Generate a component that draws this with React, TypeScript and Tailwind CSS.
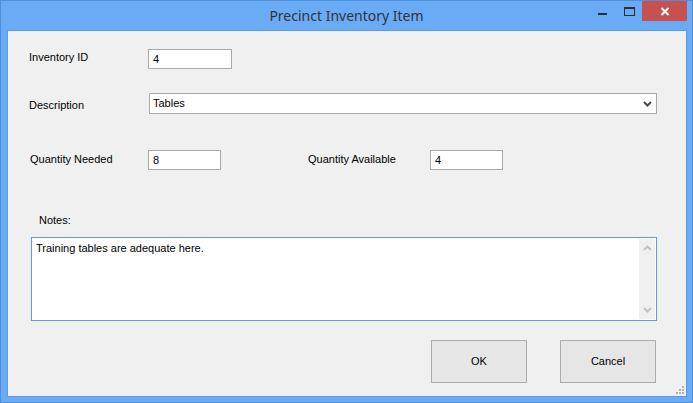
import React from 'react'

const label = 'text-[11px] leading-none text-black'
const input = 'h-[20px] border border-[#a9a9a9] bg-white px-[4px] text-[11px] leading-[18px] text-black'

function Chevron({ up, className }: { up?: boolean; className?: string }) {
  return (
    <svg width="9" height="6" viewBox="0 0 9 6" className={className}>
      <path
        d={up ? 'M1 5 L4.5 1.5 L8 5' : 'M1 1 L4.5 4.5 L8 1'}
        fill="none"
        stroke="currentColor"
        strokeWidth="2"
      />
    </svg>
  )
}

export default function App() {
  return (
    <div
      className="flex h-[403px] w-[693px] flex-col border border-[#4f8ed9] bg-[#6aabf6] text-black"
      style={{ fontFamily: '"Liberation Sans", Arial, sans-serif' }}
    >
      {/* Title bar */}
      <div className="grid h-[29px] shrink-0 grid-cols-[1fr_auto_1fr]">
        <div />
        <div
          className="pt-[6px] text-[14px] leading-[18px] text-[#333]"
          style={{ fontFamily: '"Noto Sans", "Open Sans", sans-serif' }}
        >
          Precinct Inventory Item
        </div>
        <div className="flex items-start justify-end pr-[5px]">
          <div className="flex h-[20px] w-[27px] items-start justify-center pt-[12px]">
            <div className="h-[2px] w-[9px] bg-[#2d2d2d]" />
          </div>
          <div className="flex h-[20px] w-[26px] items-start justify-center pt-[6px]">
            <div className="h-[9px] w-[11px] border border-t-2 border-[#2d2d2d]" />
          </div>
          <div className="flex h-[20px] w-[45px] items-center justify-center bg-[#c75050]">
            <svg width="10" height="9" viewBox="0 0 10 9">
              <path d="M1.5 1 L8.5 8 M8.5 1 L1.5 8" stroke="white" strokeWidth="2" />
            </svg>
          </div>
        </div>
      </div>

      {/* Client area */}
      <div className="relative ml-[6px] mr-[5px] h-[367px] border border-[#5b9be6] bg-[#f0f0f0] pt-[18px]">
        {/* Inventory ID */}
        <div className="flex h-[20px] items-center">
          <div className={`${label} ml-[21px] w-[119px] pb-[3px]`}>Inventory ID</div>
          <div className={`${input} w-[84px]`}>4</div>
        </div>

        {/* Description */}
        <div className="mt-[24px] flex h-[21px] items-center">
          <div className={`${label} ml-[21px] w-[120px] pt-[4px]`}>Description</div>
          <div className="flex h-[21px] w-[508px] items-center justify-between border border-[#a9a9a9] bg-white pl-[3px] pr-[4px]">
            <span className="text-[11px] text-black">Tables</span>
            <Chevron className="text-[#4a4a4a]" />
          </div>
        </div>

        {/* Quantities */}
        <div className="mt-[36px] flex h-[20px] items-center">
          <div className={`${label} ml-[22px] w-[118px] pb-[2px]`}>Quantity Needed</div>
          <div className={`${input} w-[73px]`}>8</div>
          <div className={`${label} ml-[87px] w-[122px] pb-[1px]`}>Quantity Available</div>
          <div className={`${input} w-[73px]`}>4</div>
        </div>

        {/* Notes */}
        <div className={`${label} ml-[31px] mt-[42px] h-[14px] pt-[3px]`}>Notes:</div>
        <div className="ml-[23px] mt-[11px] flex h-[84px] w-[626px] border border-[#569de5] bg-white">
          <div className="flex-1 pl-[4px] pt-[4px] text-[11px] leading-[13px] text-black">
            Training tables are adequate here.
          </div>
          <div className="my-px mr-px flex w-[16px] flex-col items-center justify-between bg-[#f0f0f0] py-[6px] text-[#c2c2c2]">
            <Chevron up />
            <Chevron />
          </div>
        </div>

        {/* Buttons */}
        <div className="mt-[19px] flex gap-[33px] pl-[423px]">
          <button className="flex h-[43px] w-[96px] items-center justify-center border border-[#acacac] bg-[#e6e6e6] text-[11px] text-black">
            OK
          </button>
          <button className="flex h-[43px] w-[96px] items-center justify-center border border-[#acacac] bg-[#e6e6e6] text-[11px] text-black">
            Cancel
          </button>
        </div>

        {/* Size grip */}
        <div className="absolute bottom-[2px] right-[2px] grid grid-cols-3 gap-px">
          <span />
          <span />
          <span className="h-[2px] w-[2px] bg-[#b4b4b4]" />
          <span />
          <span className="h-[2px] w-[2px] bg-[#b4b4b4]" />
          <span className="h-[2px] w-[2px] bg-[#b4b4b4]" />
          <span className="h-[2px] w-[2px] bg-[#b4b4b4]" />
          <span className="h-[2px] w-[2px] bg-[#b4b4b4]" />
          <span className="h-[2px] w-[2px] bg-[#b4b4b4]" />
        </div>
      </div>
    </div>
  )
}
